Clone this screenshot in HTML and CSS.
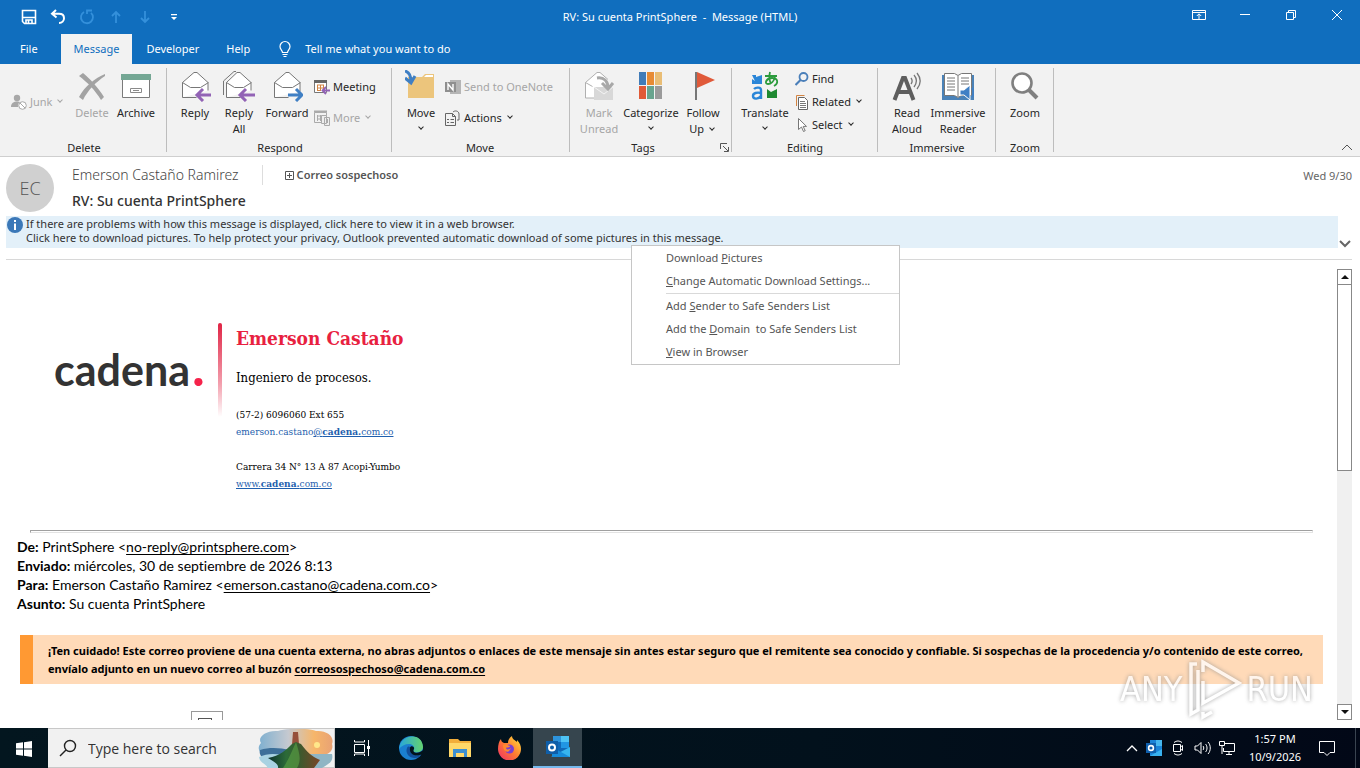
FILE: index.html
```html
<!DOCTYPE html>
<html lang="en">
<head>
<meta charset="utf-8">
<title>RV: Su cuenta PrintSphere - Message (HTML)</title>
<link rel="stylesheet" href="styles.css">
</head>
<body>
<div class="desktop">
<header class="titlebar">
  <div class="quick">
    <button aria-label="Save"><svg width="16" height="16" viewBox="0 0 16 16" fill="none" stroke="#fff" stroke-width="1.6"><path d="M1.500 1.500h13v13h-11l-2-2zM1.500 8.500h13M5 14.500v-3.500h6v3.500"/><path d="M7.500 11v3.500"/></svg></button>
    <button aria-label="Undo"><svg width="16" height="16" viewBox="0 0 16 16" fill="none" stroke="#fff" stroke-width="2"><path d="M6 1 2 4.800 6.500 8.500M2 4.800h7c3 0 5 1.800 5 4.400S12 14 9 14"/></svg></button>
    <button aria-label="Redo" disabled><svg width="16" height="16" viewBox="0 0 16 16" fill="none" stroke="#3490db" stroke-width="1.800"><path d="M5 3a6 6 0 1 0 7 .8M8 5V1.500h5"/></svg></button>
    <button aria-label="Previous" disabled><svg width="16" height="16" viewBox="0 0 16 16" fill="none" stroke="#3490db" stroke-width="1.800"><path d="M8 14V3M4 7l4-4 4 4"/></svg></button>
    <button aria-label="Next" disabled><svg width="16" height="16" viewBox="0 0 16 16" fill="none" stroke="#3490db" stroke-width="1.800"><path d="M8 2v11M4 9l4 4 4-4"/></svg></button>
    <button aria-label="Customize toolbar"><svg width="16" height="16" viewBox="0 0 16 16"><path d="M5 5h6v1.300H5zM5 8h6l-3 3z" fill="#fff"/></svg></button>
  </div>
  <div class="title">RV: Su cuenta PrintSphere&nbsp; -&nbsp; Message (HTML)</div>
  <div class="window-buttons">
    <button aria-label="Ribbon display options"><svg width="14" height="14" viewBox="0 0 14 14" fill="none" stroke="#fff"><path d="M.5 2.500h13v9H.5zM.5 4.500h13M7 11V6M4.800 8 7 5.800 9.200 8"/></svg></button>
    <button aria-label="Minimize"><svg width="14" height="14" viewBox="0 0 14 14" stroke="#fff"><path d="M2 6.500h10"/></svg></button>
    <button aria-label="Restore"><svg width="14" height="14" viewBox="0 0 14 14" fill="none" stroke="#fff"><path d="M2.500 4.500h7v7h-7zM4.500 4.500v-2h7v7h-2"/></svg></button>
    <button aria-label="Close"><svg width="14" height="14" viewBox="0 0 14 14" stroke="#fff"><path d="m2 2 10 10M12 2 2 12"/></svg></button>
  </div>
</header>
<nav class="tabs">
  <button class="tab-file">File</button>
  <button class="tab-active">Message</button>
  <button>Developer</button>
  <button>Help</button>
  <button class="tell"><svg width="14" height="18" viewBox="0 0 14 18" fill="none" stroke="#fff" stroke-width="1.200"><path d="M4.500 12.500c0-2-2.500-3-2.500-6a5 5 0 0 1 10 0c0 3-2.500 4-2.500 6zM4.500 14.500h5M5.500 16.500h3"/></svg>Tell me what you want to do</button>
</nav>

<div class="ribbon">
  <section class="group">
    <div class="tools">
      <button class="small junk" disabled><svg width="16" height="16" viewBox="0 0 16 16"><circle cx="6" cy="4" r="3.200" fill="#a8a8a8"/><path d="M0 13c0-4 3-5.500 6-5.500 1.500 0 2.500.3 3 .8-2 1-2.500 3-1.800 4.700z" fill="#a8a8a8"/><g fill="#fff" stroke="#a8a8a8"><circle cx="11.500" cy="11.500" r="3.800"/><path d="m9 9 5 5"/></g></svg>Junk<i class="chev"></i></button>
      <button class="big w40" disabled><svg width="32" height="32" viewBox="0 0 32 32" fill="#a3a3a3"><path d="M3 6 7 3c7 6 14 13 21 24l-3 3C19 20 11 12 3 6z"/><path d="M29 4v2C20 12 12 20 7 30l-4-3C9 16 19 8 29 4z"/></svg>Delete</button>
      <button class="big w48"><svg width="32" height="32" viewBox="0 0 32 32"><path d="M2.500 9.500h27v18h-27z" fill="#fff" stroke="#7a7a7a"/><path d="M1 4h30v6H1z" fill="#74a794"/><path d="M10.500 18.500h11v4h-11zM13 20.500h6" fill="none" stroke="#8a8a8a"/></svg>Archive</button>
    </div>
    <h2>Delete</h2>
  </section>
  <section class="group g-respond">
    <div class="tools">
      <button class="big w40"><svg width="32" height="32" viewBox="0 0 32 32"><path d="M3.500 27.500v-15L15 2.500h3l11 10v8M3.500 27.500h14" fill="#fff" stroke="#777"/><path d="m3.500 12.500 8 5h10l8-5" fill="none" stroke="#777"/><path d="M32 25H19M24 19l-6 6 6 6" fill="none" stroke="#9263b5" stroke-width="3"/></svg>Reply</button>
      <button class="big w48"><svg width="32" height="32" viewBox="0 0 32 32"><path d="M.5 25V11L11 1.500h2" fill="none" stroke="#777"/><path d="M3.500 27.500v-15L14 2.500h3l11 10v8M3.500 27.500h14" fill="#fff" stroke="#777"/><path d="m3.500 12.500 8 5h9l8-5" fill="none" stroke="#777"/><path d="M32 25H18M23 19l-6 6 6 6" fill="none" stroke="#9263b5" stroke-width="3"/></svg>Reply<br>All</button>
      <button class="big w48"><svg width="32" height="32" viewBox="0 0 32 32"><path d="M3.500 27.500v-15L15 2.500h3l11 10v9M3.500 27.500h14" fill="#fff" stroke="#777"/><path d="m3.500 12.500 8 5h10l8-5" fill="none" stroke="#777"/><path d="M17 25h13M25 19l6 6-6 6" fill="none" stroke="#3f7fc4" stroke-width="3"/></svg>Forward</button>
      <div class="stack two after-forward">
        <button class="small"><svg width="16" height="16" viewBox="0 0 16 16"><path d="M.5 2.500h12v11H.5z" fill="#fff" stroke="#777"/><path d="M0 1h13v3H0z" fill="#666"/><path d="M3 6h7M3 9h7M3 11.500h4M3.500 6v6M6.500 6v6M9.500 6v4" stroke="#d38443"/><path d="M16 11.500H9M12 8l-3.500 3.500L12 15" fill="none" stroke="#9263b5" stroke-width="1.800"/></svg>Meeting</button>
        <button class="small" disabled><svg width="16" height="16" viewBox="0 0 16 16" fill="none" stroke="#aaa"><path d="M.5 2.500h12v10H.5zM3 6h7M3 9h6M3.500 5v6M6.500 5v6"/><path d="M0 1.500h13" stroke-width="2"/><path d="M7.500 5.500h5v8h-5zM10.500 7.500h5v8h-5z" fill="#eee"/><path d="M13 9v4" stroke-width="2"/></svg>More<i class="chev"></i></button>
      </div>
    </div>
    <h2>Respond</h2>
  </section>
  <section class="group g-move">
    <div class="tools">
      <button class="big w48"><svg width="32" height="32" viewBox="0 0 32 32"><path d="M3 7h14l3-3h9v24H3z" fill="#ecc57c"/><path d="m19 7 2-2h7v2z" fill="#fff"/><path d="M0 1c4 1 6 4 6 11M0 8l6 5 4-7" fill="none" stroke="#3f7fc4" stroke-width="3"/></svg>Move<i class="chev"></i></button>
      <div class="stack two">
        <button class="small" disabled><svg width="16" height="16" viewBox="0 0 16 16"><path d="M5 1h11v14H5z" fill="#b5b5b5"/><path d="M0 3h11v10H0z" fill="#8f8f8f"/><path d="M3 11V5l5 6V5" fill="none" stroke="#fff" stroke-width="1.400"/></svg>Send to OneNote</button>
        <button class="small"><svg width="16" height="16" viewBox="0 0 16 16" fill="none" stroke="#666"><path d="M.5 3.500h7l3 3v9H.5zM7.500 3.500v3h3M2 9.500h2M2 12.500h2M5.500 9.500H9M5.500 12.500H9M8 2c2-2 6-1 6 2v6h-2"/></svg>Actions<i class="chev"></i></button>
      </div>
    </div>
    <h2>Move</h2>
  </section>
  <section class="group g-tags">
    <div class="tools">
      <button class="big w44" disabled><svg width="32" height="32" viewBox="0 0 32 32"><path d="M11 28H2.500V12.500L14 2.500h3l8 7M2.500 12.500l7 4" fill="#fff" stroke="#b0b0b0"/><path d="M11 17h19v13H11z" fill="#d8d8d8"/><path d="m11 17 10 7 9-7" fill="none" stroke="#f4f4f4"/><path d="M14 8c7-1 11 3 11 10M19 13l6 6 5-6" fill="none" stroke="#a8a8a8" stroke-width="3"/></svg>Mark<br>Unread</button>
      <button class="big w60"><svg width="32" height="32" viewBox="0 0 32 32"><path d="M4 2h7v13H4z" fill="#417cb8"/><path d="M12 2h7v13h-7z" fill="#e78b34"/><path d="M20 2h7v13h-7z" fill="#e9bd75"/><path d="M4 16h7v13H4z" fill="#e05a37"/><path d="M12 16h7v13h-7z" fill="#68a48e"/><path d="M20 16h7v13h-7z" fill="#9b9b9b"/></svg>Categorize<i class="chev"></i></button>
      <button class="big w44"><svg width="32" height="32" viewBox="0 0 32 32"><path d="M10 2 28 10 10 18z" fill="#e05a3a"/><path d="M9 2v28" stroke="#777" stroke-width="2"/></svg>Follow<br><span>Up <i class="chev"></i></span></button>
    </div>
    <h2>Tags</h2>
    <button class="launcher" aria-label="Tags settings"><svg width="9" height="9" viewBox="0 0 9 9" fill="none" stroke="#555"><path d="M.5 6V.5H7M3 3l5 5M8.500 4v4.500H4"/></svg></button>
  </section>
  <section class="group g-edit">
    <div class="tools">
      <button class="big w52"><svg width="32" height="32" viewBox="0 0 32 32"><path d="M3 5h4v2l6-2v9H3V9l3 2z" fill="#2a86d8"/><path d="M28 19v9h-10v-9l4 3 6-3z" fill="#1f8a32"/><path d="M5 19c2-2 7-2 7 1v9M12 23c-4-1-8 0-8 3s5 4 8 0" fill="none" stroke="#2a86d8" stroke-width="2.400"/><path d="M16 6h12M21 2c-1 4-1 8 1 12M26 7c-1 4-4 7-7 7-4 0-2-6 4-6s7 5 2 8" fill="none" stroke="#2b9b3c" stroke-width="1.800"/></svg>Translate<i class="chev"></i></button>
      <div class="stack">
        <button class="small"><svg width="14" height="16" viewBox="0 0 14 16" fill="none" stroke="#4a7fb9"><circle cx="8.500" cy="6" r="4" stroke-width="1.800"/><path d="m5.500 9-5 5" stroke-width="2.200"/></svg>Find</button>
        <button class="small"><svg width="14" height="16" viewBox="0 0 14 16" fill="#fff"><path d="M1.500 12V1.500h8" stroke="#d38443" fill="none"/><path d="M3.500 3.500h6l3 3v9h-9z" stroke="#666"/><path d="M5 7.500h5M5 9.500h6M5 11.500h6M5 13.500h6" stroke="#777"/></svg>Related<i class="chev"></i></button>
        <button class="small"><svg width="14" height="16" viewBox="0 0 14 16" fill="#fff" stroke="#777"><path d="M3.500 1.500v11l3-2.500 2 4.500 1.700-.8-2-4.300h3.300z"/></svg>Select<i class="chev"></i></button>
      </div>
    </div>
    <h2>Editing</h2>
  </section>
  <section class="group g-imm">
    <div class="tools">
      <button class="big w44"><svg width="32" height="32" viewBox="0 0 32 32" fill="none" stroke="#5e5e5e"><path d="M3.500 30 12 8h2l8.500 22M7 22h12" stroke-width="4"/><g stroke="#777" stroke-width="1.300"><path d="M20 8c1.500 2 1.500 4 0 6M23 5c3 3.500 3 8 0 12M26 3c4 5 4 11 0 16"/></g></svg>Read<br>Aloud</button>
      <button class="big w58"><svg width="32" height="32" viewBox="0 0 32 32"><path d="M0 5h3v21h11l2 2 2-2h11V5h3v25H0z" fill="#4a82b8"/><path d="M2.500 3.500h10l3.500 2 3.500-2h10v22h-10l-3.500 2-3.500-2h-10z" fill="#fff" stroke="#777"/><path d="M16 6v21M5 8h8M5 11h8M5 14h8M5 17h8M5 20h8M19 8h8M19 11h8M19 14h8" stroke="#777"/><path d="M18 20h4l6-5v15l-6-5h-4z" fill="#3f7fc4" stroke="#fff"/><path d="M30 18c2 3 2 6 0 9" fill="none" stroke="#3f7fc4" stroke-width="2"/></svg>Immersive<br>Reader</button>
    </div>
    <h2>Immersive</h2>
  </section>
  <section class="group g-zoom">
    <div class="tools">
      <button class="big w44"><svg width="32" height="32" viewBox="0 0 32 32" fill="none"><circle cx="13" cy="13" r="9.500" fill="#fff" stroke="#808080" stroke-width="2.600"/><path d="m20 20 8 8" stroke="#808080" stroke-width="4"/></svg>Zoom</button>
    </div>
    <h2>Zoom</h2>
  </section>
  <button class="collapse" aria-label="Collapse the ribbon"><svg width="12" height="8" viewBox="0 0 12 8" fill="none" stroke="#555"><path d="m1 6 5-5 5 5"/></svg></button>
</div>

<main class="message">
  <div class="head">
    <div class="avatar">EC</div>
    <div class="who">
      <div class="line1"><span class="sender">Emerson Castaño Ramirez</span><button class="policy"><svg width="9" height="9" viewBox="0 0 9 9" fill="none" stroke="#555"><path d="M.5.5h8v8h-8zM4.500 2v5M2 4.500h5"/></svg>Correo sospechoso</button></div>
      <h1>RV: Su cuenta PrintSphere</h1>
    </div>
    <time>Wed 9/30</time>
  </div>
  <div class="info-row">
    <div class="info">
      <svg width="16" height="16" viewBox="0 0 16 16"><circle cx="8" cy="8" r="8" fill="#3b78b8"/><path d="M7 3h2v2H7zM7 6.500h2V13H7z" fill="#fff"/></svg>
      <p>If there are problems with how this message is displayed, click here to view it in a web browser.<br>Click here to download pictures. To help protect your privacy, Outlook prevented automatic download of some pictures in this message.</p>
    </div>
    <button class="expand" aria-label="Expand header"><svg width="12" height="8" viewBox="0 0 12 8" fill="none" stroke="#666" stroke-width="2"><path d="m1 1 5 5 5-5"/></svg></button>
    <div class="menu" role="menu">
      <button role="menuitem">Download <u>P</u>ictures</button>
      <button role="menuitem"><u>C</u>hange Automatic Download Settings...</button>
      <hr>
      <button role="menuitem">Add <u>S</u>ender to Safe Senders List</button>
      <button role="menuitem">Add the <u>D</u>omain&nbsp; to Safe Senders List</button>
      <button role="menuitem"><u>V</u>iew in Browser</button>
    </div>
  </div>
  <div class="viewport">
    <article class="mail">
      <div class="signature">
        <div class="logo">cadena<span>.</span></div>
        <div class="bar"></div>
        <div class="card">
          <h3>Emerson Castaño</h3>
          <p class="role">Ingeniero de procesos.</p>
          <p>(57-2) 6096060 Ext 655</p>
          <p class="mailto"><a href="#"><span>emerson.castano</span><u>@<b>cadena.</b>com.co</u></a></p>
          <p>Carrera 34 N° 13 A 87 Acopi-Yumbo</p>
          <p><a href="#"><u>www.<b>cadena.</b>com.co</u></a></p>
        </div>
      </div>
      <hr class="rule">
      <div class="fields">
        <p><b>De:</b> PrintSphere &lt;<a href="#">no-reply@printsphere.com</a>&gt;</p>
        <p><b>Enviado:</b> miércoles, 30 de septiembre de 2026 8:13</p>
        <p><b>Para:</b> Emerson Castaño Ramirez &lt;<a href="#">emerson.castano@cadena.com.co</a>&gt;</p>
        <p><b>Asunto:</b> Su cuenta PrintSphere</p>
      </div>
      <div class="warning">¡Ten cuidado! Este correo proviene de una cuenta externa, no abras adjuntos o enlaces de este mensaje sin antes estar seguro que el remitente sea conocido y confiable. Si sospechas de la procedencia y/o contenido de este correo,<br>envíalo adjunto en un nuevo correo al buzón <a href="#">correosospechoso@cadena.com.co</a></div>
      <div class="blocked"><span></span></div>
    </article>
    <div class="scrollbar">
      <button aria-label="Scroll up"><svg width="8" height="4" viewBox="0 0 8 4"><path d="m0 4 4-4 4 4z" fill="#111"/></svg></button>
      <div class="thumb"></div>
      <button aria-label="Scroll down"><svg width="8" height="4" viewBox="0 0 8 4"><path d="m0 0 4 4 4-4z" fill="#111"/></svg></button>
    </div>
  </div>
  <div class="watermark"><span>ANY</span><svg width="56" height="62" viewBox="0 0 56 62" fill="none" stroke="#fff" stroke-width="3.500"><path d="M17 14V4l36 21-36 20V23M11 6H5v50l7-4V12M17 54v5l9-5"/></svg><span>RUN</span></div>
</main>

<footer class="taskbar">
  <button class="start" aria-label="Start"><svg width="16" height="16" viewBox="0 0 16 16" fill="#fff"><path d="M0 2.200 7 1.300v6.200H0zM8 1.200 16 0v7.500H8zM0 8.500h7v6.200l-7-1zM8 8.500h8V16l-8-1.200z"/></svg></button>
  <label class="search">
    <svg width="18" height="18" viewBox="0 0 18 18" fill="none" stroke="#222" stroke-width="1.400"><circle cx="11" cy="7" r="5.500"/><path d="m7 11-6 6"/></svg>
    <input type="text" placeholder="Type here to search" aria-label="Type here to search">
    <svg class="art" width="76" height="39" viewBox="0 0 76 39"><defs><linearGradient id="sky"><stop offset="0" stop-color="#7fb0d0"/><stop offset=".4" stop-color="#c5c9d0"/><stop offset=".75" stop-color="#f6b66a"/><stop offset="1" stop-color="#e9a274"/></linearGradient><linearGradient id="hill"><stop offset="0" stop-color="#0d3230"/><stop offset=".35" stop-color="#2c6b38"/><stop offset=".6" stop-color="#3a5a2e"/><stop offset="1" stop-color="#7b4426"/></linearGradient></defs><path d="M3 14C-1 8 8 1 20 2 30-1 50-1 58 2c10-1 19 5 16 13 2 6-3 10-8 11H8C0 24-1 18 3 14z" fill="url(#sky)"/><path d="M2 21c10-3 20-2 30 0v10H10c-8-2-9-7-8-10z" fill="#3d6f99"/><path d="M1 28c10-5 22-3 30 0v11H10c-3-5-8-5-9-11z" fill="#a8d2e2"/><circle cx="59" cy="16" r="3" fill="#ffe78a"/><path d="M52 25h22c2 8-4 10-10 14H48z" fill="#8fb5c4"/><path d="M35 3h5l1 12-7 1z" fill="#96503b"/><path d="M10 29c12-2 18-8 24-14l4-2 5 2c6 8 10 12 19 16l-6 8H20c1-4-5-7-10-10z" fill="url(#hill)"/><path d="M38 13c-4 9-7 17-13 26h14c5-8 2-16-1-26z" fill="#5ba344" opacity=".6"/></svg>
  </label>
  <div class="apps">
    <button aria-label="Task view"><svg width="18" height="18" viewBox="0 0 18 18" fill="none" stroke="#fff"><path d="M1.500 5.500h10v8h-10zM1.500 1v2h10V1M1.500 17v-2h10v2M15.500 1v16"/><path d="M14 7h3v3h-3z" fill="#fff" stroke="none"/></svg></button>
    <button aria-label="Edge"><svg width="24" height="24" viewBox="0 0 24 24"><defs><linearGradient id="eg"><stop offset="0" stop-color="#27a6dc"/><stop offset="1" stop-color="#65d36e"/></linearGradient></defs><circle cx="12" cy="12" r="12" fill="#1a7fd0"/><path d="M1 9C4-1 23-4 24 11c0 5-7 7-10 4 3-3 0-7-4-7C6 8 2 10 0 13z" fill="url(#eg)"/><path d="M8 12c-2 5 2 10 8 10 3 0 5-1 6-3-5 2-11 0-10-6-1-3-3-3-4-1z" fill="#124f9b"/><path d="M11 12c0-3 5-2 4 1-2 3 2 5 6 3 2-1 3-2 3-2v4l-3 1c-5 2-11-1-10-7z" fill="#03131c"/></svg></button>
    <button aria-label="File Explorer"><svg width="22" height="20" viewBox="0 0 22 20"><path d="M0 1h9l2 2h11v16H0z" fill="#f2ae3a"/><path d="M0 5h22v14H0z" fill="#ffd869"/><path d="M4 19v-8h14v8h-3v-4H7v4z" fill="#3c8fd0"/></svg></button>
    <button aria-label="Firefox"><svg width="24" height="24" viewBox="0 0 24 24"><defs><linearGradient id="ff" x1="1" x2="0" y2="1"><stop offset="0" stop-color="#ffe83c"/><stop offset=".5" stop-color="#ff7b31"/><stop offset="1" stop-color="#ef2b6b"/></linearGradient></defs><path d="M4 3c0 2 1 3 3 4 2 0 3 0 4 0 0-3 1-5 4-7 0 3 3 4 5 6 0 0 0-1 0-2 3 3 4 6 4 9a11 11 0 0 1-23 0c0-4 1-8 3-10z" fill="url(#ff)"/><circle cx="12.500" cy="13" r="4.500" fill="#7a3fd0"/><path d="M6 9c3-1 4 0 7 1 0 2-4 1-4 2 1 3 5 1 5-1-1 7-8 6-8-2z" fill="#ff8a2f"/></svg></button>
    <button class="running" aria-label="Outlook"><svg width="26" height="24" viewBox="0 0 26 24"><path d="M8 1h16v16H8z" fill="#1069b8"/><path d="M8 1h8v6H8z" fill="#2d94dd"/><path d="M16 1h8v6h-8z" fill="#4ec3f4"/><path d="M16 7h8v6h-8z" fill="#2196e3"/><path d="m6 22 19-10v10z" fill="#37b5ee"/><path d="m7 12 18 10H7z" fill="#178cda"/><path d="M1 6h12v13H1z" fill="#0f5ea8"/><circle cx="7" cy="12.500" r="3" fill="none" stroke="#fff" stroke-width="2"/></svg></button>
  </div>
  <div class="tray">
    <svg width="12" height="8" viewBox="0 0 12 8" fill="none" stroke="#fff" stroke-width="1.300"><path d="m1 7 5-5 5 5"/></svg>
    <svg width="16" height="16" viewBox="0 0 16 16"><path d="M4 0h12v16H4z" fill="#1a84d8"/><path d="M10 0h6v6h-6z" fill="#45b6ee"/><path d="m4 16 12-7v7z" fill="#38b1ef"/><path d="M0 3h10v10H0z" fill="#0f5fac"/><circle cx="5" cy="8" r="2.400" fill="none" stroke="#fff" stroke-width="1.600"/></svg>
    <svg width="16" height="16" viewBox="0 0 16 16" fill="none" stroke="#fff"><path d="M3.500 4.500h7v7h-7zM10.500 7l2-1.500v5l-2-1.500M4 2.500c3-2 5-2 8 0M4 13.500c3 2 5 2 8 0"/></svg>
    <svg width="17" height="16" viewBox="0 0 17 16" fill="none" stroke="#fff"><path d="M1 6h2.500L7 2.500v11L3.500 10H1zM9 6c1 1 1 3 0 4M11.500 4c2 2 2 6 0 8M14 2c3 3 3 9 0 12"/></svg>
    <svg width="16" height="16" viewBox="0 0 16 16" fill="none" stroke="#fff"><path d="M5 3.500h10.500v8H4.500V8M7 14.500h6M10 12v2M.5 1.500h5v4h-5zM3 6v8"/></svg>
    <div class="clock">1:57 PM<br>10/9/2026</div>
    <svg width="17" height="17" viewBox="0 0 17 17" fill="none" stroke="#fff"><path d="M.5 1.500h15v11H11l-3 3-3-3H.5z"/></svg>
  </div>
  <button class="show-desktop" aria-label="Show desktop"></button>
</footer>
</div>
</body>
</html>
```
FILE: styles.css
```css
* { box-sizing: border-box; }
body, h1, h2, h3, p { margin: 0; font-weight: normal; }
body { font: 11px/16px "Noto Sans", "Open Sans", sans-serif; color: #262626; background: #fff; }
button { margin: 0; padding: 0; border: 0; background: none; font: inherit; color: inherit; white-space: nowrap; }
svg { flex: none; }

.desktop { display: flex; flex-direction: column; height: 100vh; min-height: 600px; overflow: hidden; }

.titlebar { display: grid; grid-template-columns: 1fr auto 1fr; align-items: center; height: 34px; background: #106ebe; color: #fff; }
.quick { display: flex; gap: 13px; padding-left: 21px; }
.quick button { height: 16px; }
.window-buttons { display: flex; justify-content: flex-end; padding: 0 16px 4px 0; gap: 32px; }
.window-buttons button { height: 14px; }

.tabs { display: flex; height: 30px; background: #106ebe; color: #fff; }
.tabs button { padding: 0 13px; margin-right: 1px; }
.tabs .tab-file { padding: 0 20px; margin-right: 3px; }
.tabs .tab-active { background: #f2f2f2; color: #106ebe; }
.tabs .tell { display: flex; align-items: center; gap: 13px; padding-left: 14px; }

.ribbon { display: flex; height: 93px; flex: none; background: #f2f2f2; border-bottom: 1px solid #cfcfcf; }
.group { position: relative; display: flex; flex-direction: column; padding: 6px 7px 0 8px; width: 167px; }
.group::after { content: ""; position: absolute; right: 0; top: 4px; bottom: 4px; border-right: 1px solid #bdbdbd; }
.group h2 { font-size: 11px; text-align: center; }
.g-respond { width: 225px; }
.g-move { width: 178px; padding-left: 5px; }
.g-tags { width: 162px; padding-left: 7px; }
.g-tags h2 { padding-right: 16px; }
.g-edit { width: 146px; padding-left: 7px; }
.g-imm { width: 118px; padding-left: 7px; }
.g-zoom { width: 58px; padding-left: 7px; }
.tools { display: flex; flex: 1; }
.big { display: flex; flex-direction: column; align-items: center; }
.big svg { margin-bottom: 3px; }
.w40 { width: 40px; }
.w44 { width: 44px; }
.w48 { width: 48px; }
.w52 { width: 52px; }
.w58 { width: 58px; }
.w60 { width: 60px; }
.small { display: flex; align-items: center; gap: 3px; height: 23px; }
.junk { width: 64px; padding-left: 3px; margin-top: 20px; }
.ribbon button:disabled { color: #a6a6a6; }
.stack { display: flex; flex-direction: column; padding-left: 4px; margin-top: -3px; }
.two { gap: 8px; padding-left: 0; margin-top: 5px; }
.after-forward { padding-left: 3px; }
.chev { display: inline-block; width: 4px; height: 4px; margin: 0 3px 3px 3px; border: solid currentColor; border-width: 0 1px 1px 0; transform: rotate(45deg); }
.big > .chev { margin: 4px 0 0; }
.launcher { position: absolute; right: 3px; bottom: 4px; height: 9px; line-height: 0; }
.collapse { margin: auto 7px 4px auto; height: 8px; line-height: 0; }

.message { position: relative; display: flex; flex-direction: column; flex: 1; min-height: 0; padding: 7px 8px 8px 6px; }
.head { display: flex; align-items: flex-start; height: 52px; }
.avatar { display: flex; align-items: center; justify-content: center; width: 48px; height: 48px; border-radius: 50%; background: #d0d0d0; color: #555; font: 300 18px "Open Sans", sans-serif; }
.who { flex: 1; padding-left: 18px; }
.line1 { display: flex; align-items: center; height: 22px; }
.sender { padding-right: 23px; border-right: 1px solid #ddd; font: 300 14px/20px "Noto Sans", sans-serif; color: #444; }
.policy { display: flex; align-items: center; gap: 3px; padding-left: 22px; font-weight: 600; color: #555; }
h1 { padding-top: 4px; font-size: 14px; line-height: 22px; font-weight: 500; color: #333; }
time { padding-top: 4px; color: #666; }

.info-row { position: relative; display: flex; align-items: flex-end; justify-content: space-between; height: 44px; padding-bottom: 11px; border-bottom: 1px solid #d8d8d8; }
.info { display: flex; flex: 1; gap: 3px; height: 32px; padding: 1px; background: #e3f0f9; color: #333; }
.info p { line-height: 14px; white-space: nowrap; }
.expand { width: 14px; height: 8px; line-height: 0; }
.menu { position: absolute; left: 625px; top: 29px; z-index: 2; display: flex; flex-direction: column; width: 269px; padding: 0 0 1px; background: #fff; border: 1px solid #c6c6c6; color: #555; }
.menu button { height: 23px; padding-left: 34px; text-align: left; }
.menu hr { margin: 1px 0 0 34px; border: 0; border-top: 1px solid #d9d9d9; }

.viewport { display: flex; flex: 1; min-height: 0; padding-top: 9px; }
.mail { flex: 1; min-width: 0; overflow: hidden; padding: 54px 14px 0 11px; color: #000; }
.signature { display: flex; height: 207px; padding-left: 37px; }
.logo { width: 164px; padding-top: 20px; font: bold 43px/54px Lato, sans-serif; color: #333; white-space: nowrap; }
.logo span { margin-left: 2px; font-size: 54px; line-height: 0; color: #f5234b; }
.bar { width: 4px; height: 94px; border-radius: 2px; background: linear-gradient(#e02445, #f3a0ae 65%, #fff); }
.card { padding-left: 14px; font: 10px/17px "DejaVu Serif Condensed", "Liberation Serif", serif; }
.card h3 { padding-top: 2px; font-size: 19px; line-height: 26px; font-weight: bold; color: #e8213f; }
.card .role { padding: 17px 0 18px; font-size: 13px; line-height: 20px; }
.card .mailto { padding-bottom: 18px; }
.card a { color: #1f5fae; text-decoration: none; }
.rule { height: 3px; margin: 0 10px 0 13px; border: 1px solid #a0a0a0; border-right-color: #e3e3e3; border-bottom-color: #e3e3e3; }
.fields { padding-top: 4px; font: 14px/19px Lato, sans-serif; font-variant-ligatures: none; }
.fields a, .warning a { color: inherit; text-decoration: underline; text-underline-offset: 2px; }
.warning { margin: 22px 0 0 3px; padding: 7px 0 6px 15px; border-left: 13px solid #ff9933; background: #ffdab8; font: bold 11px/18px "Noto Sans", sans-serif; white-space: nowrap; }
.blocked { width: 32px; height: 32px; margin: 27px 0 0 174px; padding: 6px; border: 1px solid #999; }
.blocked span { display: block; width: 14px; height: 14px; border: 1px solid #555; }
.scrollbar { display: flex; flex-direction: column; width: 15px; background: #f0f0f0; }
.scrollbar button { display: flex; align-items: center; justify-content: center; height: 16px; border: 1px solid #888; background: #fff; }
.scrollbar .thumb { height: 186px; margin-bottom: auto; border: 1px solid #888; border-top: 0; background: #fff; }
.watermark { position: absolute; right: 47px; bottom: 8px; display: flex; align-items: center; gap: 4px; font: 34px/60px "Liberation Sans Narrow", "DejaVu Sans Condensed", sans-serif; color: #fff; opacity: 0.75; filter: drop-shadow(0 0 2px #888); pointer-events: none; }

.taskbar { display: flex; height: 40px; flex: none; background: linear-gradient(90deg, #03161f, #02111c 60%, #020817); color: #fff; }
.start { width: 48px; }
.start svg { vertical-align: middle; }
.search { display: flex; align-items: center; width: 287px; padding-left: 11px; border: 1px solid #c8c8c8; border-left: 0; background: #f1f1f1; }
.search input { flex: 1; min-width: 0; padding: 0 0 0 11px; border: 0; outline: 0; background: none; font: 14px "Open Sans", sans-serif; color: #333; }
.search input::placeholder { color: #333; opacity: 1; }
.apps { display: flex; padding-left: 2px; }
.apps button { display: flex; align-items: center; justify-content: center; width: 49px; }
.apps .running { background: #36454e; border-bottom: 2px solid #76b9ed; }
.tray { display: flex; align-items: center; gap: 8px; margin-left: auto; padding-right: 19px; }
.clock { width: 64px; line-height: 18px; text-align: center; margin-right: 4px; }
.show-desktop { width: 5px; border-left: 1px solid #3a4450; }
```
